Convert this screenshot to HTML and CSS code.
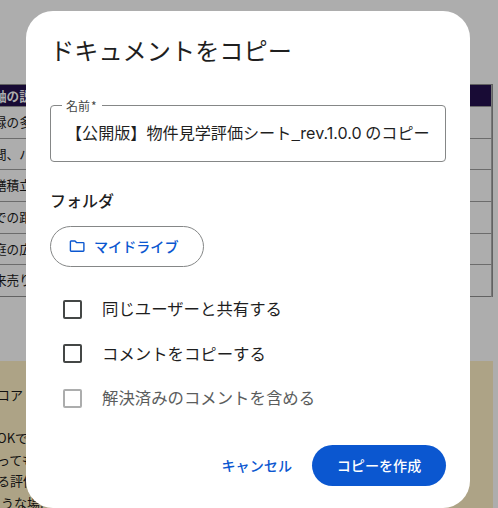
FILE: index.html
```
<!DOCTYPE html>
<html lang="ja">
<head>
    <meta charset="UTF-8">
    <meta name="viewport" content="width=device-width, initial-scale=1.0">
    <title>ドキュメントをコピー</title>
    <link rel="stylesheet" href="styles.css">
</head>
<body>
    <!-- Sheet behind the dialog -->
    <div class="sheet">
        <div class="sheet-table">
            <div class="sheet-head">軸の説</div>
            <div class="sheet-row">緑の多</div>
            <div class="sheet-row">間、バ</div>
            <div class="sheet-row">繕積立</div>
            <div class="sheet-row">での距</div>
            <div class="sheet-row">庭の広</div>
            <div class="sheet-row">来売り</div>
        </div>
        <div class="sheet-note">
            <p>コア</p>
            <p>&nbsp;</p>
            <p>OKで</p>
            <p>っても</p>
            <p>る評価</p>
            <p class="last-line">うな場.</p>
        </div>
    </div>

    <!-- Copy dialog -->
    <div class="dialog">
        <h1>ドキュメントをコピー</h1>

        <div class="name-field">
            <span class="name-label">名前<span class="required">*</span></span>
            <span class="name-value">【公開版】物件見学評価シート_<span class="latin">rev.1.0.0</span> のコピー</span>
        </div>

        <h2>フォルダ</h2>
        <button class="folder-btn">
            <svg width="16" height="13" viewBox="0 0 16 13" fill="none" stroke="currentColor" stroke-width="1.4" stroke-linejoin="round">
                <path d="M1.4 1.7Q1.4 1 2.1 1H6L7.5 2.6H14.2Q14.9 2.6 14.9 3.3V10.6Q14.9 11.3 14.2 11.3H2.1Q1.4 11.3 1.4 10.6Z"/>
            </svg>
            <span>マイドライブ</span>
        </button>

        <div class="options">
            <div class="option"><span class="box"></span><span class="option-text">同じユーザーと共有する</span></div>
            <div class="option"><span class="box"></span><span class="option-text">コメントをコピーする</span></div>
            <div class="option disabled"><span class="box"></span><span class="option-text">解決済みのコメントを含める</span></div>
        </div>

        <div class="actions">
            <button class="cancel-btn">キャンセル</button>
            <button class="copy-btn">コピーを作成</button>
        </div>
    </div>
</body>
</html>
```

FILE: styles.css
```
* {
    margin: 0;
    padding: 0;
    box-sizing: border-box;
}

body {
    font-family: 'Noto Sans CJK JP', sans-serif;
    background: #adadad;
    height: 508px;
    overflow: hidden;
    position: relative;
    white-space: nowrap;
}

button {
    font-family: inherit;
    border: none;
    background: none;
    cursor: pointer;
}

/* Sheet */
.sheet {
    width: 493px;
    height: 508px;
    padding-top: 84px;
    overflow: hidden;
    color: #111;
}

.sheet-table {
    border: 1px solid #626262;
    border-left: none;
    height: 213px;
    font-size: 12.6px;
}

.sheet-head,
.sheet-row {
    text-indent: -6px;
    border-bottom: 1px solid #6c6c6c;
    border-right: 1px solid #777;
}

.sheet-head {
    height: 22px;
    line-height: 22px;
    background: #180b35;
    color: #adadad;
    font-weight: bold;
}

.sheet-row {
    height: 31.7px;
    line-height: 29px;
}

.sheet-row:last-child {
    border-bottom: none;
}

.sheet-note {
    margin-top: 64px;
    padding-top: 23px;
    height: 147px;
    background: #ada386;
    font-size: 13px;
    line-height: 21.6px;
    text-indent: -3px;
}

.sheet-note .last-line {
    text-indent: 1px;
}

/* Dialog */
.dialog {
    position: absolute;
    left: 26px;
    top: 11px;
    width: 444px;
    height: 497px;
    padding: 23px 24px 0;
    background: #fff;
    border-radius: 27px;
    color: #1f1f1f;
}

.dialog h1 {
    font-size: 24.2px;
    font-weight: 400;
    line-height: 32px;
}

.name-field {
    position: relative;
    height: 57px;
    margin-top: 39px;
    padding-left: 15px;
    border: 1px solid #858787;
    border-radius: 4px;
    font-size: 16.1px;
    line-height: 53px;
}

.name-label {
    position: absolute;
    left: 11px;
    top: -9px;
    padding: 0 5px 0 4px;
    background: #fff;
    color: #444746;
    font-size: 12px;
    line-height: 18px;
}

.required {
    margin-left: 1px;
}

.latin {
    font-family: Inter, sans-serif;
}

.dialog h2 {
    margin-top: 26px;
    font-size: 16px;
    font-weight: 500;
    line-height: 24px;
}

.folder-btn {
    display: flex;
    align-items: center;
    gap: 9px;
    width: 154px;
    height: 41px;
    margin-top: 14px;
    padding: 0 0 1px 18px;
    border: 1px solid #858787;
    border-radius: 21px;
    color: #0b57d0;
    font-size: 14.1px;
    font-weight: 500;
}

.folder-btn span {
    padding-bottom: 1px;
}

.options {
    margin-top: 20px;
}

.option {
    display: flex;
    align-items: center;
    gap: 20px;
    height: 44.5px;
    padding-left: 13px;
    font-size: 16.4px;
}

.option-text {
    padding-bottom: 2px;
}

.box {
    width: 19px;
    height: 19px;
    border: 2px solid #444746;
    border-radius: 2px;
}

.disabled {
    color: #5b5d5d;
}

.disabled .box {
    border-color: #acadad;
}

.actions {
    display: flex;
    justify-content: flex-end;
    gap: 20px;
    margin-top: 24px;
}

.actions button {
    height: 41px;
    font-size: 14.1px;
    font-weight: 500;
}

.cancel-btn {
    color: #0b57d0;
}

.actions .copy-btn {
    width: 134px;
    border-radius: 21px;
    background: #0b57d0;
    color: #fff;
}
```
